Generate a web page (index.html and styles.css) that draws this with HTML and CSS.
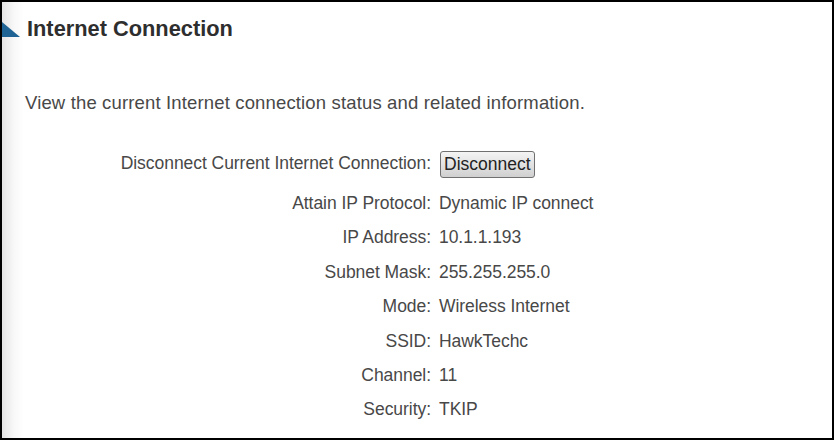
FILE: index.html
```html
<!DOCTYPE html>
<html>
<head>
<meta charset="utf-8">
<link rel="stylesheet" href="styles.css">
</head>
<body>
<div class="frame">
  <div class="header">
    <svg class="tri" width="18" height="15" viewBox="0 0 18 15"><polygon points="0,0 18,15 0,15" fill="#1f6494"/></svg>
    <h1 class="title">Internet Connection</h1>
  </div>
  <p class="desc">View the current Internet connection status and related information.</p>
  <div class="info">
    <div class="lbl first">Disconnect Current Internet Connection:</div>
    <div class="val first"><button class="btn">Disconnect</button></div>
    <div class="lbl">Attain IP Protocol:</div><div class="val">Dynamic IP connect</div>
    <div class="lbl">IP Address:</div><div class="val">10.1.1.193</div>
    <div class="lbl">Subnet Mask:</div><div class="val">255.255.255.0</div>
    <div class="lbl">Mode:</div><div class="val">Wireless Internet</div>
    <div class="lbl">SSID:</div><div class="val">HawkTechc</div>
    <div class="lbl">Channel:</div><div class="val">11</div>
    <div class="lbl">Security:</div><div class="val">TKIP</div>
  </div>
</div>
</body>
</html>
```
FILE: styles.css
```css
html, body { margin: 0; padding: 0; background: #000; }
.frame {
  width: 830px;
  height: 436px;
  margin: 2px;
  box-sizing: border-box;
  background: linear-gradient(to right, #e4e4e4 0px, #f8f8f8 12px, #ffffff 22px);
  font-family: "Liberation Sans", Arial, sans-serif;
  color: #484848;
  overflow: hidden;
}
.header {
  display: flex;
  align-items: center;
  height: 54px;
}
.tri { display: block; margin: 1px 7px 0 0; }
.title {
  margin: 0;
  font-size: 21.8px;
  font-weight: bold;
  color: #2e2e2e;
  line-height: 26px;
}
.desc {
  margin: 36px 0 0 23px;
  font-size: 18.5px;
  letter-spacing: 0.15px;
  line-height: 22px;
}
.info {
  display: grid;
  grid-template-columns: 429px auto;
  grid-template-rows: 46px;
  grid-auto-rows: 34.4px;
  column-gap: 8px;
  margin-top: 26px;
  font-size: 17.5px;
  letter-spacing: -0.05px;
}
.lbl { text-align: right; line-height: 34.4px; }
.val { line-height: 34.4px; }
.first { height: 46px; line-height: 46px; }
.btn {
  font-family: "Liberation Sans", Arial, sans-serif;
  font-size: 17.5px;
  color: #222;
  padding: 3px 3px;
  margin-left: 1px;
  border: 1px solid #707070;
  border-radius: 3px;
  background: linear-gradient(#f4f4f4, #e2e2e2 50%, #d0d0d0);
  line-height: 19px;
  height: 27px;
  vertical-align: middle;
}
```
